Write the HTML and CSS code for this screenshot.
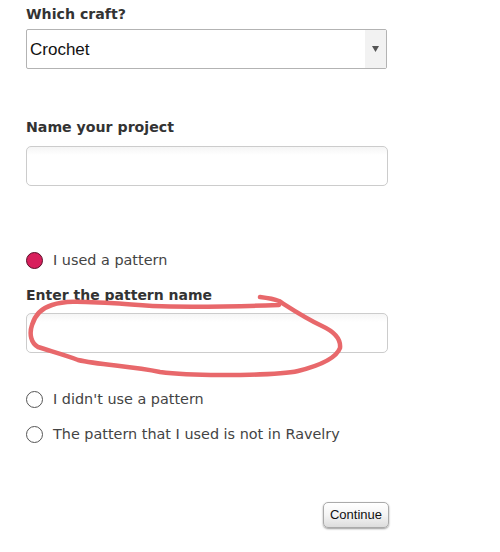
FILE: index.html
```html
<!DOCTYPE html>
<html lang="en">
<head>
<meta charset="utf-8">
<title>New project</title>
<link rel="stylesheet" href="styles.css">
</head>
<body>
<form class="form">
  <label class="label label-craft">Which craft?</label>
  <div class="select">
    <span class="select-value">Crochet</span>
    <span class="select-arrow"><svg width="7" height="6" viewBox="0 0 7 6"><path d="M0 0H7L3.5 6Z" fill="#555"/></svg></span>
  </div>
  <label class="label label-name">Name your project</label>
  <div class="input"></div>
  <div class="radio-row row-used"><span class="radio radio-on"></span><span class="radio-text">I used a pattern</span></div>
  <div class="pattern-block">
    <label class="label label-pattern">Enter the pattern name</label>
    <div class="input input-pattern"></div>
    <svg class="scribble" width="500" height="110" viewBox="0 270 500 110"><path d="M260 298C268 299 274 300 279 302C290 309 305 319 322 327C335 333 341 340 340 349C336 360 318 367 298 372C285 375 250 376 220 376C190 376 175 375 160 373C130 367 100 366 78 361C65 356 50 352 38 348C31 344 29 335 32 326C35 316 42 309 52 306C68 301 85 303 110 304C130 305 145 307 170 307.500C210 308 250 307 279 306" fill="none" stroke="#e8686b" stroke-width="4.500" stroke-linecap="round" stroke-linejoin="round"/></svg>
  </div>
  <div class="radio-row row-didnt"><span class="radio"></span><span class="radio-text">I didn't use a pattern</span></div>
  <div class="radio-row row-notin"><span class="radio"></span><span class="radio-text">The pattern that I used is not in Ravelry</span></div>
  <div class="actions"><button type="button" class="button">Continue</button></div>
</form>
</body>
</html>
```
FILE: styles.css
```css
html, body {
  margin: 0;
  padding: 0;
  background: #fff;
}
body {
  width: 500px;
  height: 552px;
  overflow: hidden;
  font-family: "DejaVu Sans", sans-serif;
  color: #333;
}
.form {
  display: flex;
  flex-direction: column;
  padding: 6px 0 0 26px;
  width: 363px;
}
.label {
  display: block;
  font-size: 14.150px;
  line-height: 17px;
  font-weight: 700;
  color: #333;
}
.label-pattern {
  font-size: 14px;
}
.select {
  display: flex;
  justify-content: space-between;
  box-sizing: border-box;
  width: 361px;
  height: 40px;
  margin-top: 6px;
  border: 1px solid #b3b3b3;
  border-radius: 2px;
  background: #fff;
}
.select-value {
  font-family: "Liberation Sans", sans-serif;
  font-size: 17px;
  line-height: 40px;
  padding-left: 3px;
  color: #111;
}
.select-arrow {
  display: flex;
  align-items: center;
  justify-content: center;
  width: 21px;
  background: #f2f2f2;
}
.label-name {
  margin-top: 50px;
}
.input {
  box-sizing: border-box;
  width: 362px;
  height: 40px;
  margin-top: 10px;
  border: 1px solid #ccc;
  border-radius: 5px;
  background: linear-gradient(#f5f5f5, #fff 8px);
}
.radio-row {
  display: flex;
  align-items: center;
  gap: 10px;
  height: 20px;
  font-size: 14.400px;
  color: #444;
}
.radio {
  box-sizing: border-box;
  flex: none;
  width: 17px;
  height: 17px;
  border: 1px solid #555;
  border-radius: 50%;
  background: #fff;
}
.radio-on {
  background: #d81f5c;
  border-color: #5a1029;
}
.row-used {
  margin-top: 64px;
}
.pattern-block {
  position: relative;
  margin-top: 17px;
}
.input-pattern {
  margin-top: 9px;
}
.scribble {
  position: absolute;
  left: -26px;
  top: -18px;
  pointer-events: none;
  filter: blur(0.5px);
}
.row-didnt {
  margin-top: 36px;
}
.row-notin {
  margin-top: 15px;
}
.actions {
  display: flex;
  justify-content: flex-end;
  margin-top: 58px;
}
.button {
  box-sizing: border-box;
  width: 66px;
  height: 26px;
  padding: 0 0 2px;
  border: 1px solid #aaa;
  border-radius: 5px;
  background: linear-gradient(#fff, #f4f4f4 50%, #ddd);
  box-shadow: 0 1px 2px rgba(0,0,0,.4);
  font-family: "Liberation Sans", sans-serif;
  font-size: 13px;
  color: #111;
}
```
